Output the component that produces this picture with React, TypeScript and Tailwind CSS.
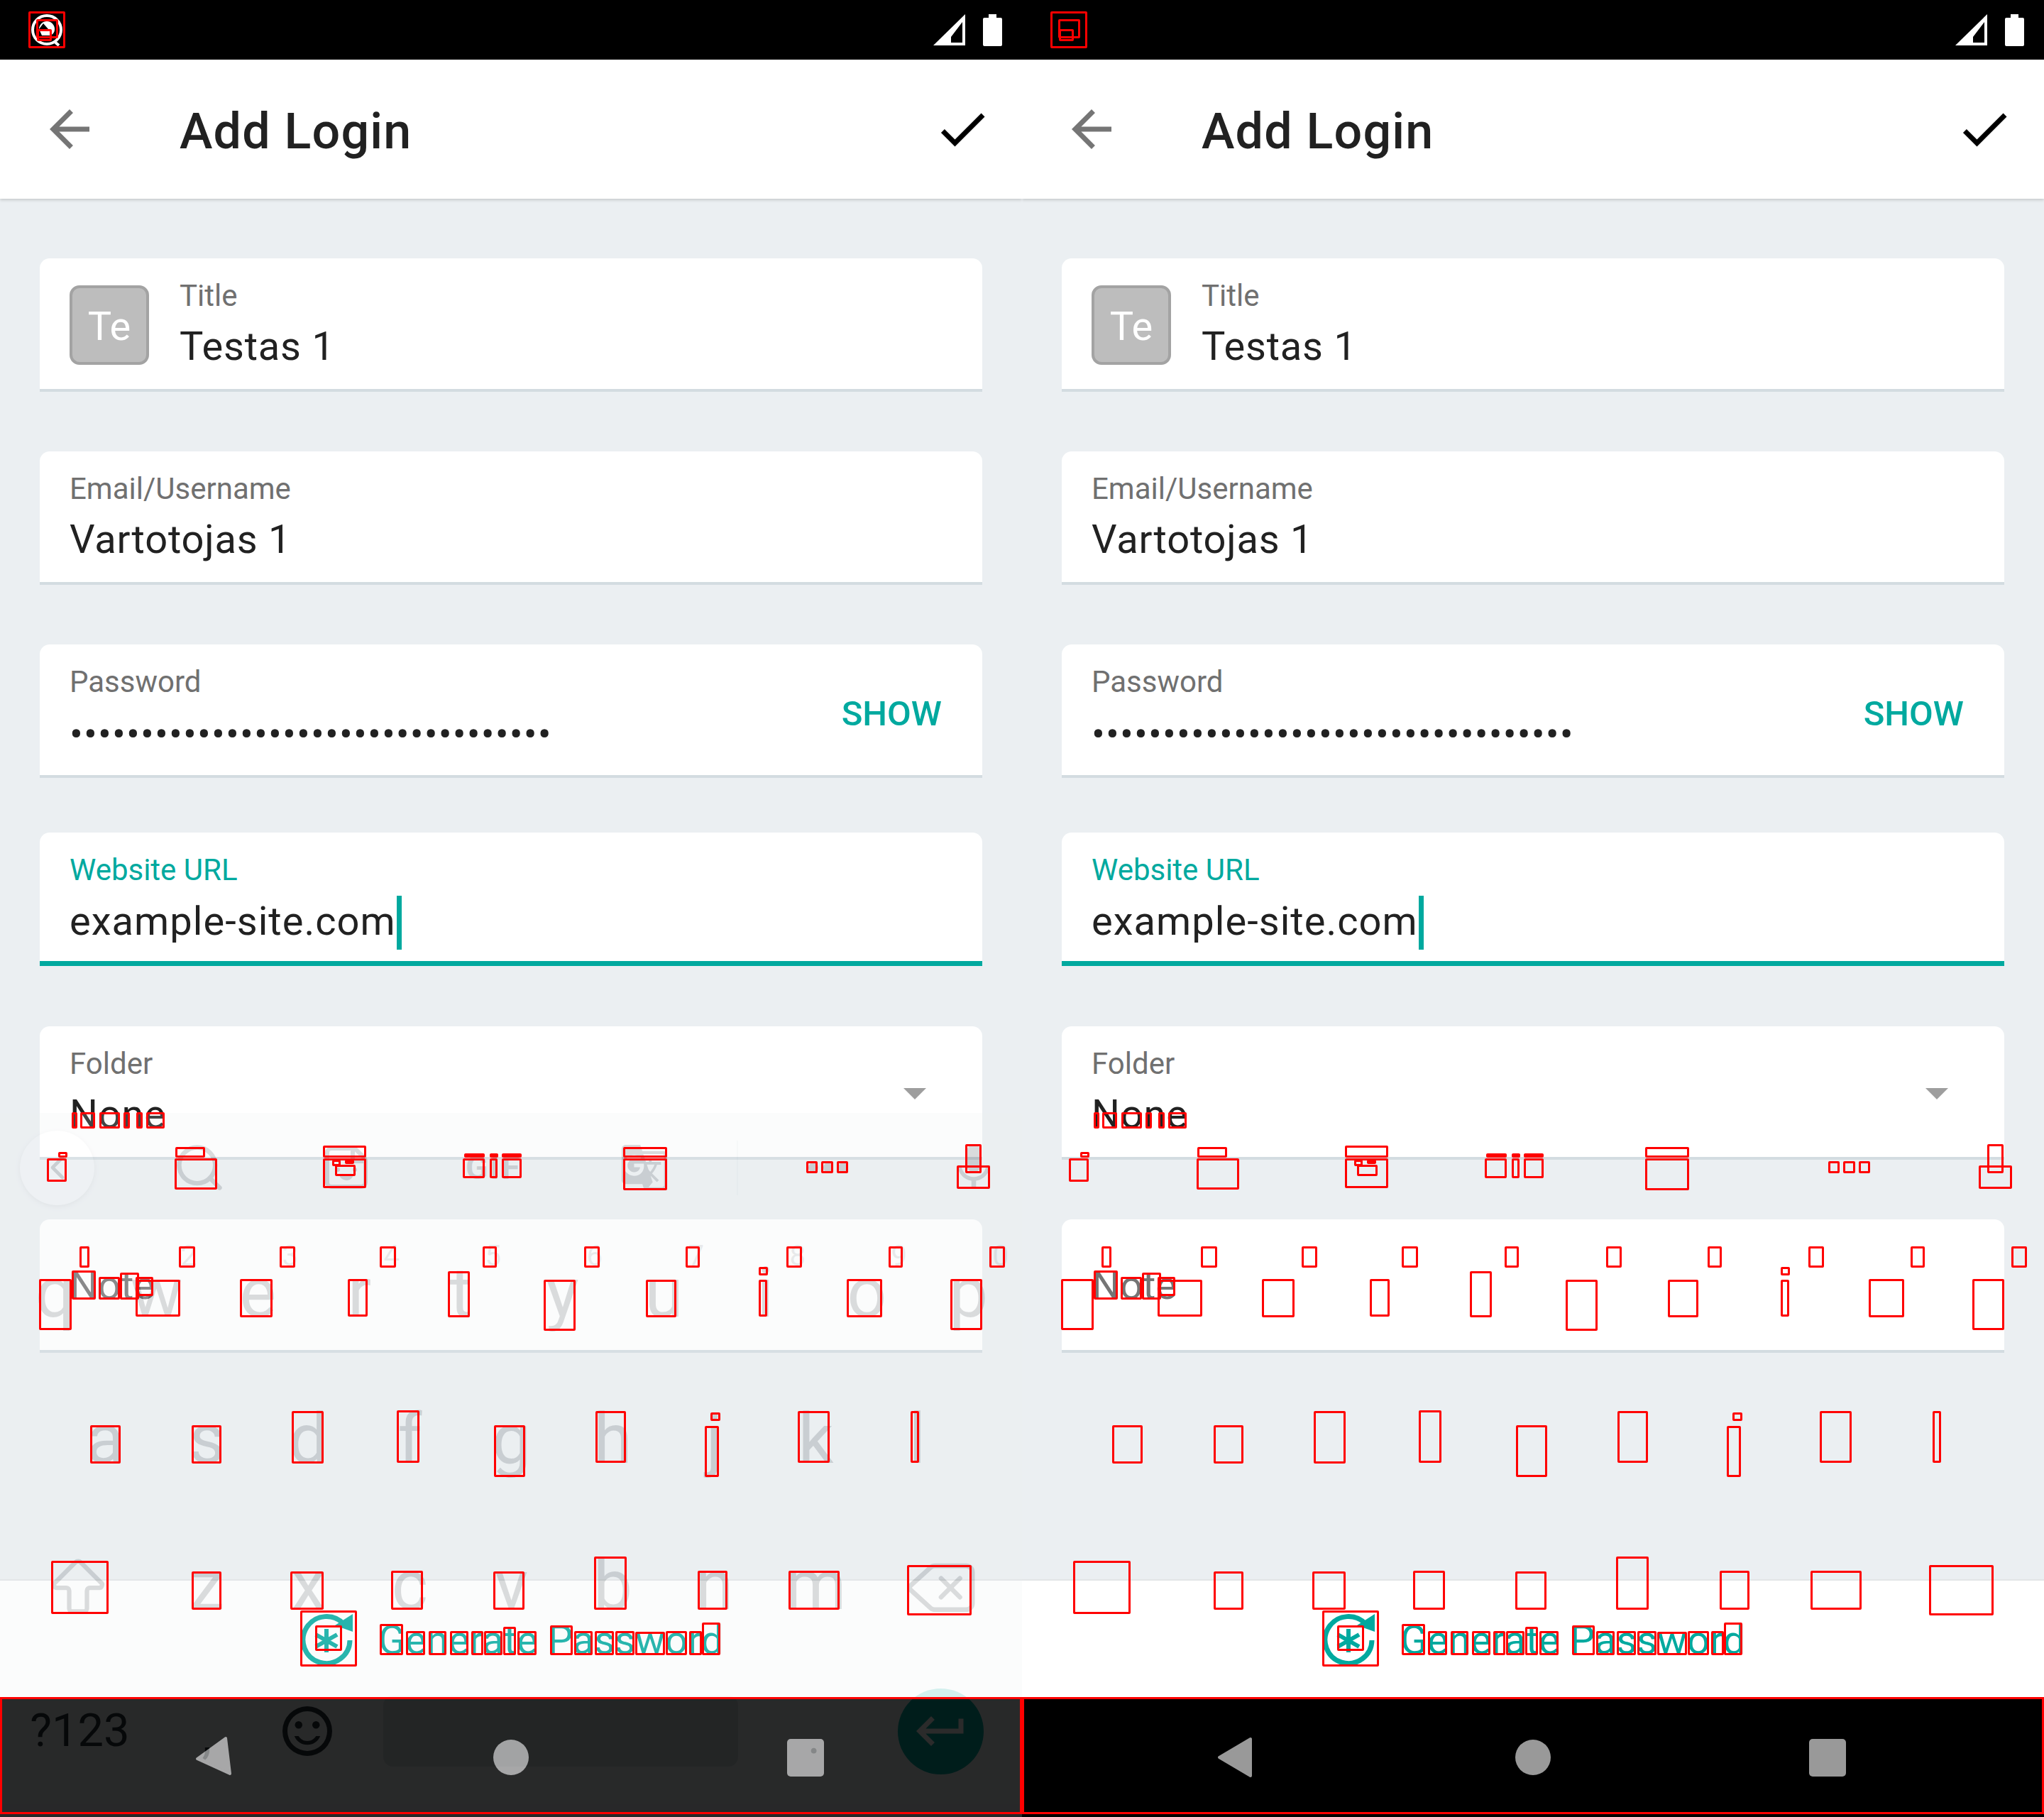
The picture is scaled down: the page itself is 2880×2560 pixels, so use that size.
import type { ReactNode } from 'react';
import { ArrowBigUp, ChevronLeft, Delete, Search, Sticker } from 'lucide-react';
import { MdGTranslate, MdMic } from 'react-icons/md';

/* Text-detection boxes drawn over each phone: [left, top, right, bottom] */
const BOXES: [number, number, number, number][] = [
  // status icon
  [41, 17, 91, 67], [52, 28, 81, 53], [53, 42, 72, 57],
  // None
  [102, 1568, 108, 1589], [114, 1568, 133, 1589], [141, 1568, 168, 1589], [175, 1568, 182, 1589], [193, 1568, 200, 1589], [207, 1568, 231, 1589],
  // keyboard toolbar
  [83, 1624, 94, 1630], [67, 1633, 93, 1664],
  [248, 1617, 288, 1630], [247, 1633, 305, 1675],
  [456, 1615, 515, 1630], [456, 1633, 515, 1673], [469, 1635, 479, 1642], [487, 1635, 498, 1637], [473, 1642, 500, 1656],
  [655, 1626, 682, 1630], [653, 1633, 682, 1659], [691, 1626, 701, 1630], [691, 1633, 700, 1659], [708, 1626, 734, 1630], [708, 1633, 734, 1659],
  [879, 1617, 939, 1630], [879, 1633, 939, 1676],
  [1137, 1637, 1151, 1652], [1158, 1637, 1173, 1652], [1180, 1637, 1194, 1652],
  [1361, 1613, 1382, 1652], [1349, 1643, 1394, 1674],
  // digit hints
  [113, 1757, 125, 1785], [253, 1757, 274, 1785], [395, 1757, 415, 1785], [536, 1757, 557, 1785], [681, 1757, 699, 1785],
  [824, 1757, 844, 1785], [967, 1757, 985, 1785], [1109, 1757, 1129, 1785], [1253, 1757, 1271, 1785], [1395, 1757, 1415, 1785],
  // Note
  [102, 1791, 134, 1830], [140, 1800, 168, 1830], [170, 1794, 195, 1830], [192, 1800, 215, 1825],
  // qwerty
  [56, 1803, 100, 1873], [192, 1804, 253, 1854], [339, 1803, 383, 1855], [491, 1803, 517, 1854], [632, 1792, 661, 1855],
  [767, 1804, 810, 1874], [911, 1804, 952, 1855], [1070, 1786, 1081, 1796], [1070, 1804, 1080, 1854], [1194, 1803, 1242, 1855], [1340, 1803, 1383, 1873],
  // asdf
  [128, 2009, 169, 2061], [271, 2009, 311, 2061], [412, 1989, 455, 2061], [560, 1988, 590, 2060], [697, 2009, 739, 2080],
  [840, 1989, 881, 2060], [1002, 1991, 1014, 2001], [994, 2010, 1012, 2080], [1125, 1989, 1168, 2060], [1284, 1989, 1294, 2060],
  // zxcv
  [73, 2200, 152, 2273], [271, 2215, 311, 2267], [410, 2215, 455, 2267], [552, 2214, 595, 2267], [696, 2215, 738, 2267],
  [838, 2194, 882, 2267], [984, 2214, 1024, 2267], [1112, 2214, 1182, 2267], [1279, 2206, 1368, 2275],
  // generate password
  [424, 2270, 502, 2347], [445, 2291, 481, 2325],
  [536, 2289, 567, 2331], [573, 2299, 598, 2331], [605, 2299, 628, 2331], [635, 2299, 659, 2331], [665, 2299, 680, 2331], [683, 2299, 707, 2331], [710, 2293, 726, 2331], [730, 2299, 755, 2331],
  [776, 2291, 806, 2331], [810, 2299, 834, 2331], [839, 2299, 864, 2331], [868, 2299, 893, 2331], [896, 2300, 936, 2331], [939, 2299, 967, 2331], [972, 2299, 988, 2331], [990, 2287, 1014, 2331],
];

function Card({ children, focused, className = '' }: { children: ReactNode; focused?: boolean; className?: string }) {
  return (
    <div
      className={`h-[188px] rounded-t-[14px] bg-white pl-[42px] ${
        focused ? 'border-b-[7px] border-[#00a99f]' : 'border-b-4 border-[#d3dce1]'
      } ${className}`}
    >
      {children}
    </div>
  );
}

function Label({ children, focused }: { children: ReactNode; focused?: boolean }) {
  return (
    <div className={`pt-[25px] text-[42px] leading-[56px] ${focused ? 'text-[#00a99f]' : 'text-[#707070]'}`}>{children}</div>
  );
}

function Value({ children }: { children: ReactNode }) {
  return <div className="mt-[7px] text-[56px] leading-[72px] tracking-[0.8px] text-[#212121]">{children}</div>;
}

function NotificationIcon() {
  return (
    <svg viewBox="0 0 50 50" className="h-[50px] w-[50px]">
      <circle cx="25" cy="25" r="20" fill="none" stroke="#fff" strokeWidth="4" />
      <path d="M35 41l7 6" stroke="#fff" strokeWidth="4" />
      <path d="M14 24a11 11 0 0 1 22 0c0 5-3 8-7 9H18z" fill="#fff" />
      <path d="M14 24l6-8 7 8z" fill="#000" />
      <rect x="14" y="35" width="15" height="2" fill="#fff" />
    </svg>
  );
}

function StatusBar({ withIcon }: { withIcon?: boolean }) {
  return (
    <div className="flex h-[84px] shrink-0 items-center justify-between bg-black pl-[41px] pr-[28px]">
      <div className="h-[50px] w-[50px]">{withIcon && <NotificationIcon />}</div>
      <div className="flex items-center gap-[25px]">
        <svg viewBox="0 0 45 44" className="h-[44px] w-[45px]">
          <path fillRule="evenodd" d="M45 0v44H0zM41 11L25 32v8h16z" fill="#fff" />
        </svg>
        <svg viewBox="0 0 27 45" className="h-[45px] w-[27px]">
          <path d="M8 0h11v5h6a2 2 0 0 1 2 2v36a2 2 0 0 1-2 2H2a2 2 0 0 1-2-2V7a2 2 0 0 1 2-2h6z" fill="#fff" />
        </svg>
      </div>
    </div>
  );
}

function AppBar() {
  return (
    <div className="relative z-10 flex h-[196px] shrink-0 items-center bg-white pl-[56px] pr-[42px] shadow-[0_2px_4px_rgba(0,0,0,0.16)]">
      <svg viewBox="0 0 24 24" className="h-[84px] w-[84px]">
        <path d="M20 11H7.83l5.59-5.59L12 4l-8 8 8 8 1.41-1.41L7.83 13H20v-2z" fill="#757575" />
      </svg>
      <div className="ml-[113px] flex-1 pt-[6px] text-[70px] font-medium leading-[84px] tracking-[1.2px] text-[#212121]">Add Login</div>
      <svg viewBox="0 0 24 24" className="h-[84px] w-[84px]">
        <path d="M9 16.17L4.83 12l-1.42 1.41L9 19 21 7l-1.41-1.41z" fill="#000" />
      </svg>
    </div>
  );
}

function Form() {
  return (
    <div className="flex min-h-0 flex-1 flex-col gap-[84px] bg-[#ebeff2] px-[56px] pt-[84px]">
      <Card>
        <div className="flex">
          <div className="mr-[43px] mt-[38px] flex h-[112px] w-[112px] items-center justify-center rounded-[14px] border-4 border-[#a3a3a3] bg-[#bdbdbd] pt-[3px] text-[56px] text-white">
            Te
          </div>
          <div>
            <Label>Title</Label>
            <Value>Testas 1</Value>
          </div>
        </div>
      </Card>
      <Card>
        <Label>Email/Username</Label>
        <Value>Vartotojas 1</Value>
      </Card>
      <Card>
        <div className="flex items-center justify-between pr-[57px]">
          <div>
            <Label>Password</Label>
            <Value>
              <span className="relative top-[3px] tracking-[1.1px]">{'•'.repeat(34)}</span>
            </Value>
          </div>
          <div className="mt-[36px] text-[49px] font-medium text-[#00a99f]">SHOW</div>
        </div>
      </Card>
      <Card focused className="-mt-[7px]">
        <Label focused>Website URL</Label>
        <Value>
          <span className="relative top-[1px] tracking-[1.05px]">
            example-site.com
            <span className="absolute left-full top-[-3px] ml-[1px] h-[76px] w-[7px] bg-[#00a99f]" />
          </span>
        </Value>
      </Card>
      <Card className="mt-px">
        <div className="flex items-center justify-between pr-[79px]">
          <div>
            <Label>Folder</Label>
            <Value>None</Value>
          </div>
          <svg viewBox="0 0 32 16" className="mt-[30px] h-4 w-8">
            <path d="M0 0h32L16 16z" fill="#9e9e9e" />
          </svg>
        </div>
      </Card>
      <Card>
        <div className="pt-[57px] text-[56px] leading-[72px] text-[#757575]">Note</div>
      </Card>
    </div>
  );
}

function GenerateBar() {
  return (
    <div className="flex h-[167px] shrink-0 items-start justify-center border-t-2 border-[#e2e5e7] bg-white pt-[44px]">
      <div className="flex items-center gap-[34px] text-[56px] leading-[80px] text-[#00a99f]">
        <svg viewBox="0 0 78 78" className="h-[78px] w-[78px]">
          <path d="M64 17A33 33 0 1 0 72 39" fill="none" stroke="#00a99f" strokeWidth="7" />
          <path d="M51 18l25-16v25z" fill="#00a99f" />
          <path d="M39 23v33M24 31l30 17M54 31L24 48" stroke="#00a99f" strokeWidth="6" />
        </svg>
        <span>Generate Password</span>
      </div>
    </div>
  );
}

function NavBar({ tilted }: { tilted?: boolean }) {
  return (
    <div className="flex h-[168px] shrink-0 items-center bg-black pl-[275px]">
      {/* back triangle was caught mid-rotation on the left phone */}
      <svg viewBox="0 0 56 60" className="h-[60px] w-[56px] overflow-visible">
        <path
          d={tilted ? 'M3 32L43 3l6 50z' : 'M3 30L47 4v52z'}
          fill="#999"
          stroke="#999"
          strokeWidth="4"
          strokeLinejoin="round"
        />
      </svg>
      <div className="ml-[364px] h-[50px] w-[50px] rounded-full bg-[#999]" />
      <div className="ml-[364px] h-[53px] w-[52px] rounded-[5px] bg-[#999]" />
    </div>
  );
}

function Key({ label, hint }: { label: string; hint?: string }) {
  return (
    <div className="relative w-[143px] shrink-0 text-center text-[98px] leading-[199px]">
      {label}
      {hint && <span className="absolute right-[15px] top-[28px] text-[40px] leading-[40px] text-[#7d8488]">{hint}</span>}
    </div>
  );
}

/* Fading keyboard caught in the screenshot, left phone only */
function GhostKeyboard() {
  return (
    <div className="absolute bottom-0 left-0 top-[1568px] w-[1440px] bg-[#eceff1] text-[#263238] opacity-[0.17]">
      <div className="flex h-[154px] items-center">
        <div className="ml-[28px] flex h-[105px] w-[105px] items-center justify-center rounded-full bg-white shadow-[0_2px_6px_rgba(0,0,0,0.25)]">
          <ChevronLeft size={56} strokeWidth={2} />
        </div>
        <Search className="ml-[110px]" size={76} strokeWidth={2} />
        <Sticker className="ml-[133px]" size={72} strokeWidth={2} />
        <div className="ml-[131px] w-[81px] text-center text-[46px] font-bold tracking-[3px]">GIF</div>
        <MdGTranslate className="ml-[137px]" size={70} />
        <div className="ml-[95px] h-[77px] w-[2px] bg-[#cfd8dc]" />
        <div className="ml-[99px] flex gap-[7px]">
          <span className="h-[14px] w-[14px] rounded-full bg-[#263238]" />
          <span className="h-[14px] w-[14px] rounded-full bg-[#263238]" />
          <span className="h-[14px] w-[14px] rounded-full bg-[#263238]" />
        </div>
        <MdMic className="ml-[138px]" size={78} />
      </div>
      <div className="ml-[6px] flex h-[206px]">
        {[...'qwertyuiop'].map((k, i) => (
          <Key key={k} label={k} hint={String((i + 1) % 10)} />
        ))}
      </div>
      <div className="ml-[77px] flex h-[206px]">
        {[...'asdfghjkl'].map((k) => (
          <Key key={k} label={k} />
        ))}
      </div>
      <div className="flex h-[206px]">
        <div className="flex w-[220px] items-center justify-center">
          <ArrowBigUp size={100} strokeWidth={1.5} />
        </div>
        {[...'zxcvbnm'].map((k) => (
          <Key key={k} label={k} />
        ))}
        <div className="flex w-[209px] items-center justify-center">
          <Delete size={106} strokeWidth={1.5} />
        </div>
      </div>
      <div className="flex h-[198px] items-center">
        <div className="w-[220px] pl-[5px] text-center text-[65px]">?123</div>
        <div className="w-[143px] pt-[14px] text-center text-[70px]">,</div>
        <svg viewBox="0 0 24 24" className="ml-[28px] h-[84px] w-[84px]" fill="#263238">
          <path d="M12 2a10 10 0 1 0 0 20 10 10 0 0 0 0-20zm0 18a8 8 0 1 1 0-16 8 8 0 0 1 0 16z" />
          <circle cx="8.5" cy="9.5" r="1.5" />
          <circle cx="15.5" cy="9.5" r="1.5" />
          <path d="M12 17.5c2.3 0 4.3-1.3 5.2-3.5h-1.7c-.7 1.2-2 2-3.5 2s-2.8-.8-3.5-2H6.800c.9 2.200 2.900 3.500 5.200 3.500z" />
        </svg>
        <div className="ml-[65px] h-[100px] w-[500px] rounded-[14px] bg-[#cfd8dc]" />
        <div className="ml-[36px] w-[142px] pt-[14px] text-center text-[70px]">.</div>
        <div className="ml-[47px] flex h-[121px] w-[121px] items-center justify-center rounded-full bg-[#00a99f]">
          <svg viewBox="0 0 24 24" className="h-[84px] w-[84px]">
            <path d="M19 7v4H5.830l3.580-3.590L8 6l-6 6 6 6 1.410-1.410L5.830 13H21V7z" fill="#fff" />
          </svg>
        </div>
      </div>
    </div>
  );
}

function DetectionBoxes() {
  return (
    <>
      {BOXES.map(([l, t, r, b], i) => (
        <div
          key={i}
          className="absolute rounded-[2px] border-[3px] border-[#ff0000]"
          style={{ left: l - 1, top: t - 1, width: r - l + 2, height: b - t + 2 }}
        />
      ))}
      <div className="absolute left-0 top-[2391px] h-[165px] w-[1440px] border-[3px] border-[#ff0000]" />
    </>
  );
}

function Phone({ ghost }: { ghost?: boolean }) {
  return (
    <div className="relative flex h-[2560px] w-[1440px] flex-col overflow-hidden">
      <StatusBar withIcon={ghost} />
      <AppBar />
      <Form />
      <GenerateBar />
      <NavBar tilted={ghost} />
      {ghost && <GhostKeyboard />}
      <DetectionBoxes />
    </div>
  );
}

export default function App() {
  return (
    <div className="flex h-[2560px] w-[2880px] font-[Roboto,sans-serif]">
      <Phone ghost />
      <Phone />
    </div>
  );
}
